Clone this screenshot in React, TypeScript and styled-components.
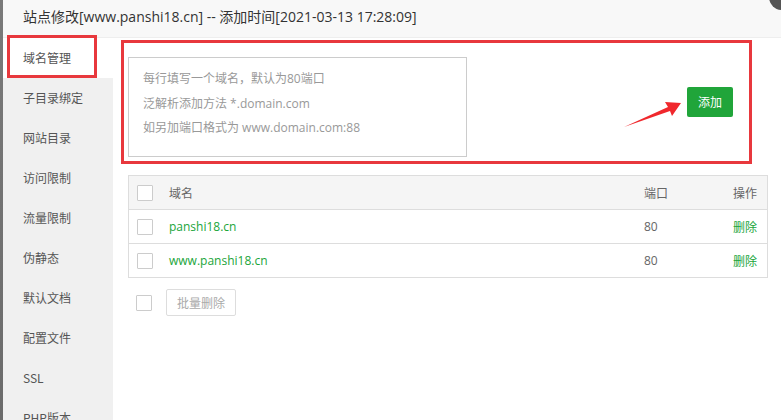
import React from "react";
import styled, { createGlobalStyle } from "styled-components";

const Global = createGlobalStyle`
  html, body { margin: 0; padding: 0; background: #fff; overflow: hidden; }
  body { font-family: "Open Sans", "Noto Sans CJK SC", sans-serif; color: #333; }
  * { box-sizing: border-box; }
`;

const Page = styled.div`
  display: flex;
  width: 781px;
  height: 420px;
  overflow: hidden;
`;

const Backdrop = styled.div`
  width: 3px;
  flex: none;
  background: linear-gradient(#7a7a7a, #6b6b6b);
`;

const Dialog = styled.div`
  flex: 1;
  display: flex;
  flex-direction: column;
  background: #fff;
  position: relative;
`;

const TitleBar = styled.div`
  height: 38px;
  flex: none;
  background: #f8f8f8;
  border-bottom: 1px solid #eee;
  padding-left: 20px;
  font-size: 14px;
  line-height: 34px;
  color: #333;
  white-space: nowrap;
`;

const CloseDot = styled.div`
  position: absolute;
  right: -14px;
  top: -16px;
  width: 26px;
  height: 26px;
  border-radius: 50%;
  background: #555;
`;

const Body = styled.div`
  flex: 1;
  display: flex;
  min-height: 0;
`;

const Sidebar = styled.div`
  width: 110px;
  flex: none;
  background: #f0f0f0;
  display: flex;
  flex-direction: column;
`;

const NavItem = styled.div<{ $active?: boolean }>`
  position: relative;
  height: 40px;
  flex: none;
  padding-left: 20px;
  line-height: 40px;
  font-size: 12px;
  color: #555;
  background: ${(p) => (p.$active ? "#fff" : "transparent")};
  font-family: "Noto Sans CJK SC", "Open Sans", sans-serif;
`;

const Mark = styled.div`
  position: absolute;
  border: 3px solid #e8383d;
  pointer-events: none;
`;

const Main = styled.div`
  flex: 1;
  padding: 19px 13px 0 15px;
  display: flex;
  flex-direction: column;
`;

const FormRow = styled.div`
  position: relative;
  display: flex;
  align-items: flex-start;
  height: 100px;
`;

const Area = styled.div`
  width: 339px;
  height: 100px;
  border: 1px solid #ccc;
  padding: 9px 0 0 14px;
  display: flex;
  flex-direction: column;
`;

const Hint = styled.div`
  font-size: 12px;
  line-height: 24.5px;
  color: #999;
  font-family: "Open Sans", "Noto Sans CJK SC", sans-serif;
`;

const AddButton = styled.div`
  margin-left: auto;
  margin-right: 35px;
  margin-top: 30px;
  width: 46px;
  height: 30px;
  border-radius: 2px;
  background: #20a53a;
  color: #fff;
  font-size: 12px;
  line-height: 30px;
  text-align: center;
  font-family: "Noto Sans CJK SC", sans-serif;
`;

const Arrow = styled.svg`
  position: absolute;
  left: 496px;
  top: 40px;
  overflow: visible;
`;

const Table = styled.div`
  margin-top: 18px;
  border: 1px solid #ddd;
  display: flex;
  flex-direction: column;
`;

const Row = styled.div<{ $head?: boolean }>`
  display: grid;
  grid-template-columns: 40px 1fr 62px 61px;
  align-items: center;
  height: ${(p) => (p.$head ? "33px" : "34px")};
  background: ${(p) => (p.$head ? "#f5f5f5" : "#fff")};
  border-top: ${(p) => (p.$head ? "none" : "1px solid #ddd")};
  font-size: 12px;
  color: #666;
`;

const Box = styled.span`
  display: block;
  width: 16px;
  height: 16px;
  border: 1px solid #ccc;
  background: #fff;
  border-radius: 1px;
  margin-left: 8px;
`;

const Cell = styled.span<{ $green?: boolean; $right?: boolean }>`
  color: ${(p) => (p.$green ? "#20a53a" : "#666")};
  text-align: ${(p) => (p.$right ? "right" : "left")};
  padding-right: ${(p) => (p.$right ? "10px" : "0")};
  font-family: "Open Sans", "Noto Sans CJK SC", sans-serif;
  white-space: nowrap;
`;

const BatchRow = styled.div`
  display: flex;
  align-items: center;
  margin-top: 11px;
  gap: 14px;
`;

const BatchButton = styled.div`
  width: 70px;
  height: 27px;
  border: 1px solid #ddd;
  border-radius: 2px;
  font-size: 12px;
  line-height: 25px;
  text-align: center;
  color: #aaa;
  background: #fff;
  font-family: "Noto Sans CJK SC", sans-serif;
`;

const navs = ["域名管理", "子目录绑定", "网站目录", "访问限制", "流量限制", "伪静态", "默认文档", "配置文件", "SSL", "PHP版本"];

const domains = [
  { name: "panshi18.cn", port: 80 },
  { name: "www.panshi18.cn", port: 80 },
];

export default function App() {
  return (
    <Page>
      <Global />
      <Backdrop />
      <Dialog>
        <CloseDot />
        <TitleBar>站点修改[www.panshi18.cn] -- 添加时间[2021-03-13 17:28:09]</TitleBar>
        <Body>
          <Sidebar>
            {navs.map((n, i) => (
              <NavItem key={n} $active={i === 0}>
                {n}
                {i === 0 && <Mark style={{ left: 4, top: -3, width: 90, height: 43 }} />}
              </NavItem>
            ))}
          </Sidebar>
          <Main>
            <FormRow>
              <Mark style={{ left: -7, top: -17, width: 631, height: 124 }} />
              <Area>
                <Hint>每行填写一个域名，默认为80端口</Hint>
                <Hint>泛解析添加方法 *.domain.com</Hint>
                <Hint>如另加端口格式为 www.domain.com:88</Hint>
              </Area>
              <AddButton>添加</AddButton>
              <Arrow width="60" height="30" viewBox="0 0 60 30">
                <path d="M0 30 L44 10 L41 5 L57 6 L48 19 L46 14 Z" fill="#f0282d" />
              </Arrow>
            </FormRow>
            <Table>
              <Row $head>
                <Box />
                <Cell>域名</Cell>
                <Cell>端口</Cell>
                <Cell $right>操作</Cell>
              </Row>
              {domains.map((d) => (
                <Row key={d.name}>
                  <Box />
                  <Cell $green>{d.name}</Cell>
                  <Cell>{d.port}</Cell>
                  <Cell $green $right>删除</Cell>
                </Row>
              ))}
            </Table>
            <BatchRow>
              <Box />
              <BatchButton>批量删除</BatchButton>
            </BatchRow>
          </Main>
        </Body>
      </Dialog>
    </Page>
  );
}
